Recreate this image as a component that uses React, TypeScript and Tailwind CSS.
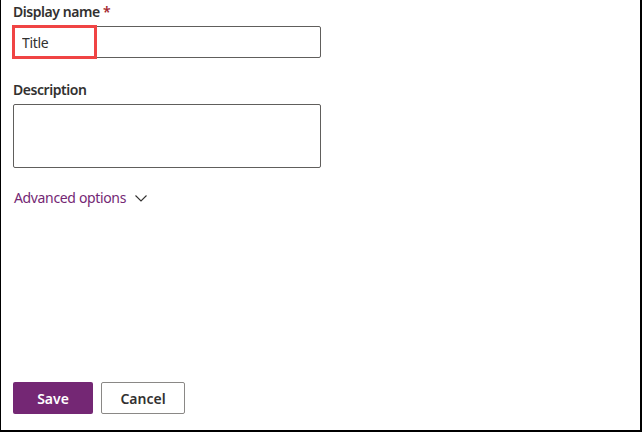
import { useState } from "react";

const font = { fontFamily: '"Segoe UI", "Noto Sans", Arial, sans-serif' };

export default function App() {
  const [title, setTitle] = useState("Title");
  const [description, setDescription] = useState("");

  return (
    <div
      style={font}
      className="flex h-[432px] w-[642px] flex-col border-b-2 border-l border-r-2 border-black bg-white pl-3 pb-[16px] text-[#323130]"
    >
      <label className="mt-[2px] block text-[14px] font-semibold leading-5 tracking-[-0.45px]">
        Display name <span className="text-[#a4262c]">*</span>
      </label>
      <div className="relative mt-[4px] w-[308px]">
        <input
          value={title}
          onChange={(e) => setTitle(e.target.value)}
          className="h-[32px] w-full rounded-[2px] border border-[#605e5c] px-2 text-[14px] tracking-[-0.3px] text-[#323130] outline-none"
        />
        <div className="pointer-events-none absolute -left-[1px] -top-[1px] h-[34px] w-[85px] border-[3px] border-[#f04444]" />
      </div>

      <label className="mt-[22px] block text-[14px] font-semibold leading-5 tracking-[-0.45px]">
        Description
      </label>
      <textarea
        value={description}
        onChange={(e) => setDescription(e.target.value)}
        className="mt-[4px] h-[64px] w-[308px] resize-none rounded-[2px] border border-[#605e5c] px-2 py-1 text-[14px] outline-none"
      />

      <button className="mt-[20px] flex w-fit items-center gap-[8px] pl-[1px] text-[14px] leading-5 tracking-[-0.35px] text-[#742774]">
        Advanced options
        <svg width="14" height="10" viewBox="0 0 14 10" className="text-[#323130]">
          <path d="M1.5 2.5 L7 8 L12.5 2.5" fill="none" stroke="currentColor" strokeWidth="1.1" />
        </svg>
      </button>

      <div className="mt-auto flex gap-2">
        <button className="h-[32px] w-[80px] rounded-[2px] bg-[#742774] text-[14px] font-semibold text-white">
          Save
        </button>
        <button className="h-[32px] w-[84px] rounded-[2px] border border-[#8a8886] bg-white text-[14px] font-semibold text-[#323130]">
          Cancel
        </button>
      </div>
    </div>
  );
}
